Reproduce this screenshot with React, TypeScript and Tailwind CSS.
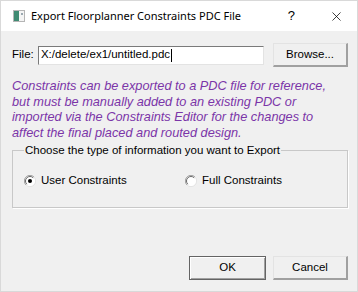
import { X } from "lucide-react";

const ui = { fontFamily: '"Liberation Sans", Arial, sans-serif' };

function Radio({ checked }: { checked?: boolean }) {
  return (
    <svg width="12" height="12" viewBox="0 0 12 12" className="shrink-0">
      <circle cx="6" cy="6" r="5.5" fill="#fff" />
      <path d="M10 2 A5.5 5.5 0 0 0 2 10" fill="none" stroke="#a0a0a0" strokeWidth="1" />
      <path d="M9.2 2.8 A4.5 4.5 0 0 0 2.8 9.2" fill="none" stroke="#696969" strokeWidth="1" />
      <path d="M2 10 A5.5 5.5 0 0 0 10 2" fill="none" stroke="#e3e3e3" strokeWidth="1" />
      {checked && <circle cx="6" cy="6" r="2" fill="#000" />}
    </svg>
  );
}

function Button({ label, primary }: { label: string; primary?: boolean }) {
  return (
    <div
      className={
        "flex h-[24px] shrink-0 items-center justify-center bg-[#f0f0f0] text-[11.5px] text-black " +
        (primary
          ? "w-[77px] border border-[#646464] shadow-[inset_1px_1px_0_#fff,inset_-1px_-1px_0_#a0a0a0]"
          : "w-[75px] border-t border-l border-r-2 border-b-2 border-t-[#e3e3e3] border-l-[#e3e3e3] border-r-[#a0a0a0] border-b-[#a0a0a0]")
      }
    >
      {label}
    </div>
  );
}

export default function App() {
  return (
    <div className="flex h-[292px] w-[358px] flex-col overflow-hidden border border-[#d9d9d9] bg-[#f0f0f0]" style={ui}>
      <div className="flex h-[30px] shrink-0 items-center bg-white">
        <div className="ml-[12px] flex h-[12px] w-[12px] shrink-0 border border-[#b5b5b5] bg-[#f4f4f4]">
          <div className="h-full w-[5px] bg-[#3f8a72]" />
          <div className="ml-[2px] mt-[2px] h-[2px] w-[2px] bg-[#9aa8b0]" />
        </div>
        <span
          className="ml-[6px] whitespace-nowrap text-[11px] text-black"
          style={{ fontFamily: '"Noto Sans", "Liberation Sans", sans-serif' }}
        >
          Export Floorplanner Constraints PDC File
        </span>
        <span className="ml-auto mr-[34px] shrink-0 text-[13px] text-black">?</span>
        <X className="mr-[13px] h-[15px] w-[15px] shrink-0 text-black" strokeWidth={1.2} />
      </div>

      <div className="flex flex-col pl-[11px] pr-[9px]">
        <div className="mt-[12px] flex items-center">
          <span className="w-[26px] text-[11.5px] text-black">File:</span>
          <div className="flex h-[19px] w-[227px] items-center border border-t-[#7a7a7a] border-l-[#7a7a7a] border-r-[#e3e3e3] border-b-[#e3e3e3] bg-white pl-[2px] text-[11.5px] text-black">
            X:/delete/ex1/untitled.pdc
            <span className="ml-[1px] h-[13px] w-[1px] bg-black" />
          </div>
          <div className="ml-[9px]">
            <Button label="Browse..." />
          </div>
        </div>

        <p className="mt-[11px] text-[12.75px] italic leading-[15.5px] text-[#7b35a8]">
          Constraints can be exported to a PDC file for reference,
          <br />
          but must be manually added to an existing PDC or
          <br />
          imported via the Constraints Editor for the changes to
          <br />
          affect the final placed and routed design.
        </p>

        <fieldset className="mt-[2px] h-[66px] border border-[#c8c8c8] px-[11px] shadow-[1px_1px_0_#fff]">
          <legend className="px-[1px] text-[11.5px] text-black">Choose the type of information you want to Export</legend>
          <div className="mt-[13px] flex items-center text-[11.5px] text-black">
            <div className="flex w-[161px] items-center gap-[5px]">
              <Radio checked />
              User Constraints
            </div>
            <div className="flex items-center gap-[5px]">
              <Radio />
              Full Constraints
            </div>
          </div>
        </fieldset>

        <div className="mt-[48px] flex justify-end gap-[7px]">
          <Button label="OK" primary />
          <Button label="Cancel" />
        </div>
      </div>
    </div>
  );
}
